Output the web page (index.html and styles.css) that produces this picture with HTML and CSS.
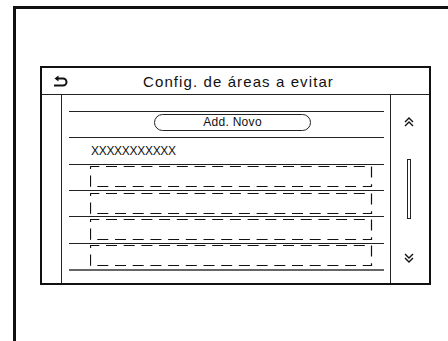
FILE: index.html
```html
<!DOCTYPE html>
<html lang="pt">
<head>
    <meta charset="UTF-8">
    <title>Config. de áreas a evitar</title>
    <link rel="stylesheet" href="styles.css">
</head>
<body>
    <div class="device">
        <div class="screen">
            <div class="header">
                <svg class="back" width="15" height="12" viewBox="0 0 15 12">
                    <path d="M3 3.5 H10 A3.5 3.5 0 0 1 10 10.5 H1" fill="none" stroke="#111" stroke-width="2"/>
                    <path d="M5.5 0.5 L1.5 3.5 L5.5 6.5 Z" fill="#111"/>
                </svg>
                <span class="title">Config. de áreas a evitar</span>
            </div>
            <div class="body">
                <div class="side"></div>
                <div class="list">
                    <div class="row row-add"><span class="add-btn">Add. Novo</span></div>
                    <div class="row row-name"><span class="name">XXXXXXXXXXX</span></div>
                    <div class="row"><svg class="slot" width="283" height="22"><rect x="0.5" y="0.5" width="281" height="20"/></svg></div>
                    <div class="row"><svg class="slot" width="283" height="22"><rect x="0.5" y="0.5" width="281" height="20"/></svg></div>
                    <div class="row"><svg class="slot" width="283" height="22"><rect x="0.5" y="0.5" width="281" height="20"/></svg></div>
                    <div class="row"><svg class="slot" width="283" height="22"><rect x="0.5" y="0.5" width="281" height="20"/></svg></div>
                </div>
                <div class="scroll">
                    <svg class="chevron up" width="10" height="10" viewBox="0 0 10 10">
                        <path d="M1 5 L5 1 L9 5 M1 9 L5 5 L9 9" fill="none" stroke="#111" stroke-width="1.4"/>
                    </svg>
                    <div class="track"></div>
                    <svg class="chevron down" width="10" height="10" viewBox="0 0 10 10">
                        <path d="M1 1 L5 5 L9 1 M1 5 L5 9 L9 5" fill="none" stroke="#111" stroke-width="1.4"/>
                    </svg>
                </div>
            </div>
        </div>
    </div>
</body>
</html>
```
FILE: styles.css
```css
body {
    margin: 0;
    background-color: #fff;
    color: #111;
    font-family: "Liberation Sans", Arial, sans-serif;
    overflow: hidden;
}
.device {
    margin: 6px 0 0 13px;
    height: 275px;
    padding: 57px 0 0 24px;
    border-top: 3px solid #111;
    border-left: 3px solid #111;
}
.screen {
    width: 387px;
    height: 215px;
    border: 2px solid #111;
    display: flex;
    flex-direction: column;
}
.header {
    height: 26px;
    border-bottom: 1px solid #222;
    display: flex;
    align-items: center;
    padding-left: 11px;
}
.back {
    display: block;
}
.title {
    flex: 1;
    margin-right: 20px;
    text-align: center;
    font-size: 15px;
    letter-spacing: 1.1px;
}
.body {
    flex: 1;
    display: flex;
}
.side {
    width: 19px;
    border-right: 1px solid #222;
}
.list {
    flex: 1;
    padding: 16px 6px 0 7px;
}
.row {
    height: 25.33px;
    border-top: 1px solid #222;
    display: flex;
    align-items: center;
}
.row:last-child {
    border-bottom: 2px solid #666;
}
.row-add {
    align-items: flex-start;
}
.add-btn {
    margin: 2px 0 0 85px;
    width: 157px;
    height: 17px;
    box-sizing: border-box;
    border: 1px solid #222;
    border-radius: 9px;
    text-align: center;
    font-size: 12px;
    line-height: 15px;
    letter-spacing: 0.3px;
}
.row-name {
    padding-left: 22px;
}
.name {
    font-size: 12px;
    letter-spacing: -0.3px;
}
.slot {
    display: block;
    margin: 0 0 0 21px;
}
.slot rect {
    fill: none;
    stroke: #111;
    stroke-width: 1.2;
    stroke-dasharray: 11 6.7;
    stroke-dashoffset: 2.2;
}
.scroll {
    width: 35px;
    border-left: 1px solid #222;
    display: flex;
    flex-direction: column;
    align-items: center;
    padding-right: 3px;
}
.chevron {
    display: block;
}
.up {
    margin-top: 22px;
}
.track {
    margin-top: 32px;
    width: 4px;
    height: 60px;
    border: 1px solid #222;
    box-sizing: border-box;
}
.down {
    margin-top: 34px;
}
```
